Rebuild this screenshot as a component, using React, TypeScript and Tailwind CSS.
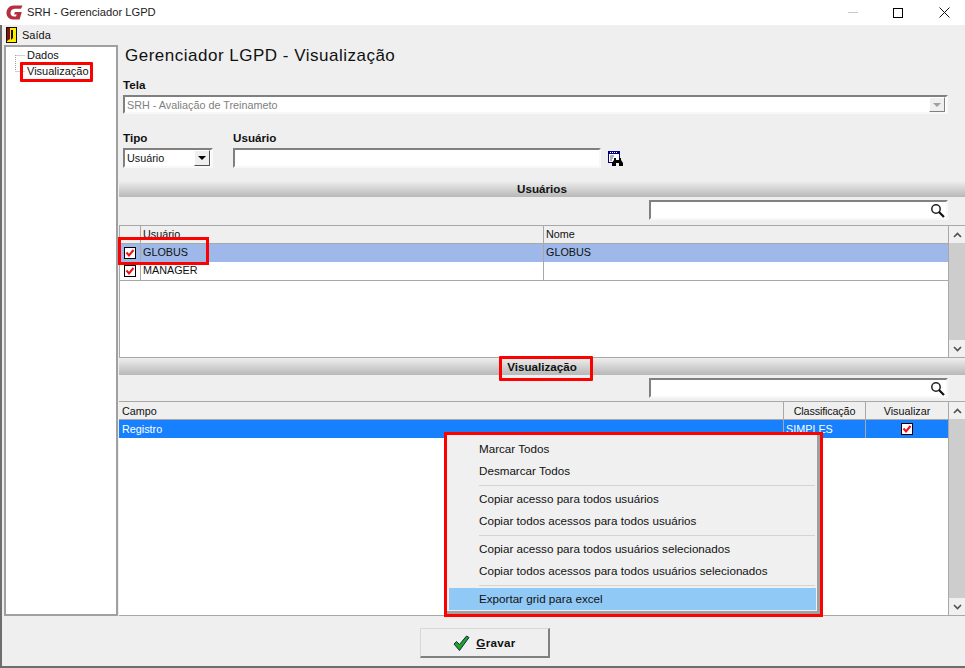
import React from "react";

const font = { fontFamily: '"Liberation Sans", Arial, sans-serif' };

function Check() {
  return (
    <svg width="12" height="12" viewBox="0 0 12 12" className="block">
      <rect x="0.5" y="0.5" width="11" height="11" fill="#fff" stroke="#000" />
      <path d="M2.5 5.5 L5 8.5 L9.5 3" fill="none" stroke="#f01010" strokeWidth="2" />
    </svg>
  );
}

function Lens() {
  return (
    <svg width="15" height="15" viewBox="0 0 15 15" className="block">
      <circle cx="6" cy="6" r="4.2" fill="none" stroke="#222" strokeWidth="1.5" />
      <path d="M9 9 L14 14" stroke="#111" strokeWidth="2.2" />
    </svg>
  );
}

function Sunken({ className, children }: { className: string; children?: React.ReactNode }) {
  return (
    <div className={`border-2 border-t-[#808080] border-l-[#808080] border-r-[#f8f8f8] border-b-[#f8f8f8] bg-white ${className}`}>
      {children}
    </div>
  );
}

function Section({ title, className }: { title: string; className: string }) {
  return (
    <div className={`flex items-center justify-center bg-gradient-to-b from-[#efefef] to-[#b8b8b8] text-[11.65px] font-bold text-[#111] ${className}`}>
      {title}
    </div>
  );
}

function Search() {
  return (
    <div className="flex justify-end pr-[17px]">
      <Sunken className="flex h-[20px] w-[299px] items-center justify-end pr-[1px]">
        <Lens />
      </Sunken>
    </div>
  );
}

function Scrollbar() {
  return (
    <div className="flex w-[16px] shrink-0 flex-col bg-[#f0f0f0]">
      <div className="flex h-[17px] items-center justify-center">
        <svg width="9" height="6" viewBox="0 0 9 6"><path d="M1 5 L4.5 1.5 L8 5" fill="none" stroke="#505050" strokeWidth="1.6" /></svg>
      </div>
      <div className="flex-1 bg-[#cdcdcd]" />
      <div className="flex h-[17px] items-center justify-center">
        <svg width="9" height="6" viewBox="0 0 9 6"><path d="M1 1 L4.5 4.5 L8 1" fill="none" stroke="#505050" strokeWidth="1.6" /></svg>
      </div>
    </div>
  );
}

const menu: (string | null)[] = [
  "Marcar Todos",
  "Desmarcar Todos",
  null,
  "Copiar acesso para todos usuários",
  "Copiar todos acessos para todos usuários",
  null,
  "Copiar acesso para todos usuários selecionados",
  "Copiar todos acessos para todos usuários selecionados",
  null,
];

export default function App() {
  return (
    <div className="relative flex h-[668px] w-[965px] flex-col overflow-hidden bg-white text-[10.8px] text-[#111]" style={font}>
      {/* title bar */}
      <div className="flex h-[25px] shrink-0 items-center bg-white pl-[6px]">
        <svg width="17" height="17" viewBox="0 0 17 17" className="mr-[4px] -mt-[1px]">
          <path d="M16.5 1.5 L15 4.8 H8.5 C6 4.8 4.5 7 4.5 9 C4.5 11 6 12.5 8 12.5 H10 L10.7 10.5 H8 L9 8 H15.8 L13.6 15.5 H7 C3 15.5 0.5 12.5 0.5 9 C0.5 5 3.5 1.5 7.5 1.5 Z" fill="#b5303e" />
        </svg>
        <span className="text-[11.2px] text-[#222]">SRH - Gerenciador LGPD</span>
        <div className="flex-1" />
        <div className="mr-[35px] h-px w-[10px] bg-[#c8c8c8]" />
        <div className="mr-[36px] h-[10px] w-[10px] border border-black" />
        <svg width="11" height="11" viewBox="0 0 11 11" className="mr-[15px]"><path d="M0.5 0.5 L10.5 10.5 M10.5 0.5 L0.5 10.5" stroke="#111" fill="none" /></svg>
      </div>

      {/* window body */}
      <div className="flex min-h-0 flex-1 flex-col border-b-2 border-l-2 border-[#6e6e6e] bg-[#efefef]">
        {/* menu */}
        <div className="flex h-[20px] shrink-0 items-center pl-[4px]">
          <svg width="11" height="16" viewBox="0 0 11 16" className="mr-[5px]">
            <rect width="11" height="16" fill="#111" />
            <rect x="1" y="1" width="9" height="14" fill="#ffee00" />
            <path d="M1 1 H4 V12 L1 14 Z" fill="#8a1010" />
            <path d="M5 3 H7 V11 L5 13 Z" fill="#111" />
          </svg>
          <span className="text-[11px]">Saída</span>
        </div>

        {/* main */}
        <div className="flex min-h-0 flex-1">
          {/* tree */}
          <div className="ml-[2px] flex h-[571px] w-[114px] shrink-0 border-2 border-[#a0a0a0] bg-white pl-[9px] text-[11px]">
            <svg width="12" height="32" viewBox="0 0 12 32" className="shrink-0">
              <path d="M0.5 8 V24 M0.5 8.5 H10 M0.5 24.5 H10" stroke="#a0a0a0" strokeDasharray="1 1" fill="none" />
            </svg>
            <div className="flex flex-col">
              <div className="h-[16px] leading-[16px]">Dados</div>
              <div className="h-[16px] leading-[16px]">Visualização</div>
            </div>
          </div>

          {/* content */}
          <div className="ml-px flex min-w-0 flex-1 flex-col">
            <div className="h-[20px] pl-[6px] pt-[1px] text-[17px] leading-[20px] tracking-[0.5px] text-[#111]">Gerenciador LGPD - Visualização</div>
            <div className="mt-[12px] h-[18px] pl-[4px] text-[11.65px] font-bold leading-[15px]">Tela</div>
            <div className="pl-[4px] pr-[17px]">
              <Sunken className="flex h-[19px] items-center justify-between pl-[2px] pr-[1px] text-[#808080]">
                <span className="pt-[1px]">SRH - Avaliação de Treinameto</span>
                <div className="flex h-[15px] w-[16px] items-center justify-center border border-b-[#808080] border-r-[#808080] border-l-white border-t-white bg-[#efefef]">
                  <div className="h-0 w-0 border-x-[4px] border-t-[4px] border-x-transparent border-t-[#a0a0a0]" />
                </div>
              </Sunken>
            </div>

            <div className="mt-[16px] flex pl-[4px]">
              <div className="w-[90px] shrink-0">
                <div className="h-[18px] text-[11.65px] font-bold leading-[16px]">Tipo</div>
                <Sunken className="flex h-[20px] w-[90px] items-center justify-between pl-[2px] pr-px">
                  <span>Usuário</span>
                  <div className="flex h-[16px] w-[16px] items-center justify-center border border-b-[#505050] border-r-[#505050] border-l-white border-t-white bg-[#efefef]">
                    <div className="h-0 w-0 border-x-[4px] border-t-[4px] border-x-transparent border-t-black" />
                  </div>
                </Sunken>
              </div>
              <div className="ml-[20px] w-[368px] shrink-0">
                <div className="h-[18px] text-[11.65px] font-bold leading-[16px]">Usuário</div>
                <Sunken className="h-[20px]" />
              </div>
              <svg width="16" height="16" viewBox="0 0 16 16" className="ml-[7px] mt-[21px]">
                <rect x="0.5" y="0.5" width="11" height="11" fill="#fff" stroke="#000080" />
                <rect x="0" y="0" width="12" height="3" fill="#000080" />
                <path d="M2 1.5 H3 M4 1.5 H5 M6 1.5 H7 M8 1.5 H9" stroke="#fff" />
                <path d="M2 5 H6 M2 7 H5 M2 9 H4" stroke="#606060" />
                <path d="M6 7 H8 V9 H11 V7 H13 V9 L15 12 V15 H11 V12 H8 V15 H4 V12 L6 9 Z" fill="#000" />
              </svg>
            </div>

            <Section title="Usuários" className="mt-[13px] h-[16px] shrink-0" />
            <div className="mt-[3px] h-[20px]"><Search /></div>

            {/* grid 1 */}
            <div className="mt-[5px] flex h-[132px] shrink-0 border-t border-[#a8a8a8]">
              <div className="flex min-w-0 flex-1 flex-col border-l border-[#a8a8a8] bg-white">
                <div className="flex h-[18px] shrink-0 border-b border-[#a8a8a8] bg-[#efefef] leading-[17px]">
                  <div className="w-[21px] border-r border-[#a8a8a8]" />
                  <div className="w-[403px] border-r border-[#a8a8a8] pl-[2px]">Usuário</div>
                  <div className="flex-1 pl-[2px]">Nome</div>
                </div>
                <div className="flex h-[18px] shrink-0 bg-[#9db8e9] leading-[17px]">
                  <div className="flex w-[21px] items-center justify-center border-r border-[#a8a8a8]"><Check /></div>
                  <div className="w-[403px] border-r border-[#a8a8a8] pl-[2px]">GLOBUS</div>
                  <div className="flex-1 pl-[2px]">GLOBUS</div>
                </div>
                <div className="flex h-[19px] shrink-0 border-b border-[#a8a8a8] leading-[17px]">
                  <div className="flex w-[21px] items-center justify-center border-r border-[#a8a8a8]"><Check /></div>
                  <div className="w-[403px] border-r border-[#a8a8a8] pl-[2px]">MANAGER</div>
                  <div className="flex-1" />
                </div>
                <div className="flex-1" />
              </div>
              <div className="w-px shrink-0 bg-[#a8a8a8]" />
              <Scrollbar />
            </div>

            <Section title="Visualização" className="h-[18px] shrink-0 border-t border-[#a8a8a8]" />
            <div className="mt-[3px] h-[20px]"><Search /></div>

            {/* grid 2 */}
            <div className="mt-[3px] flex min-h-0 flex-1 border-y border-[#a8a8a8]">
              <div className="flex min-w-0 flex-1 flex-col bg-white">
                <div className="flex h-[18px] shrink-0 border-b border-[#a8a8a8] bg-[#efefef] leading-[19px]">
                  <div className="w-[665px] border-r border-[#a8a8a8] pl-[3px]">Campo</div>
                  <div className="w-[82px] border-r border-[#a8a8a8] text-center tracking-[-0.15px]">Classificação</div>
                  <div className="flex-1 text-center">Visualizar</div>
                </div>
                <div className="flex h-[18px] shrink-0 bg-[#1680ff] leading-[19px] text-white">
                  <div className="w-[665px] border-r border-[#a8a8a8] pl-[3px]">Registro</div>
                  <div className="w-[82px] border-r border-[#a8a8a8] pl-[2px]">SIMPLES</div>
                  <div className="flex flex-1 items-center justify-center"><Check /></div>
                </div>
              </div>
              <div className="w-px shrink-0 bg-[#a8a8a8]" />
              <Scrollbar />
            </div>
          </div>
        </div>

        {/* footer */}
        <div className="flex h-[50px] shrink-0 items-start justify-center pl-[3px] pt-[12px]">
          <div className="flex h-[30px] w-[130px] items-center justify-center gap-[6px] border border-b-2 border-r-2 border-b-[#808080] border-r-[#808080] border-l-[#d8d8d8] border-t-[#d8d8d8] bg-[#efefef] pt-[1px] text-[11.65px] font-bold">
            <svg width="17" height="16" viewBox="0 0 17 16">
              <path d="M1 9 L3.5 6.5 L6.5 9.5 L13.5 1 L16 2.5 L6.5 15.5 Z" fill="#23a323" stroke="#06304a" strokeWidth="1" />
            </svg>
            <span className="tracking-[0.3px]"><span className="underline">G</span>ravar</span>
          </div>
        </div>
      </div>

      {/* context menu */}
      <div className="absolute left-[444px] top-[432px] flex h-[185px] w-[379px] flex-col border-[3px] border-[#ff0000] bg-[#f0f0f0] pb-[3px] pl-[2px] pt-[3px] text-[11.65px] shadow-[inset_-3px_-3px_0_#a0a0a0]">
        {menu.map((m, i) =>
          m === null ? (
            <div key={i} className="ml-[30px] mr-[5px] flex h-[6px] items-center"><div className="h-px w-full bg-[#d4d4d4]" /></div>
          ) : (
            <div key={i} className="flex h-[22px] items-center pl-[30px]">{m}</div>
          )
        )}
        <div className="mr-[4px] flex h-[22px] items-center bg-[#90c8f6] pl-[30px]">Exportar grid para excel</div>
      </div>

      {/* red annotations */}
      <div className="absolute left-[20px] top-[62px] h-[20px] w-[73px] rounded-[1px] border-[3px] border-[#ff0000]" />
      <div className="absolute left-[118px] top-[237px] h-[28px] w-[91px] border-[3px] border-[#ff0000]" />
      <div className="absolute left-[499px] top-[356px] h-[25px] w-[94px] rounded-[1px] border-[3px] border-[#ff0000]" />
    </div>
  );
}
